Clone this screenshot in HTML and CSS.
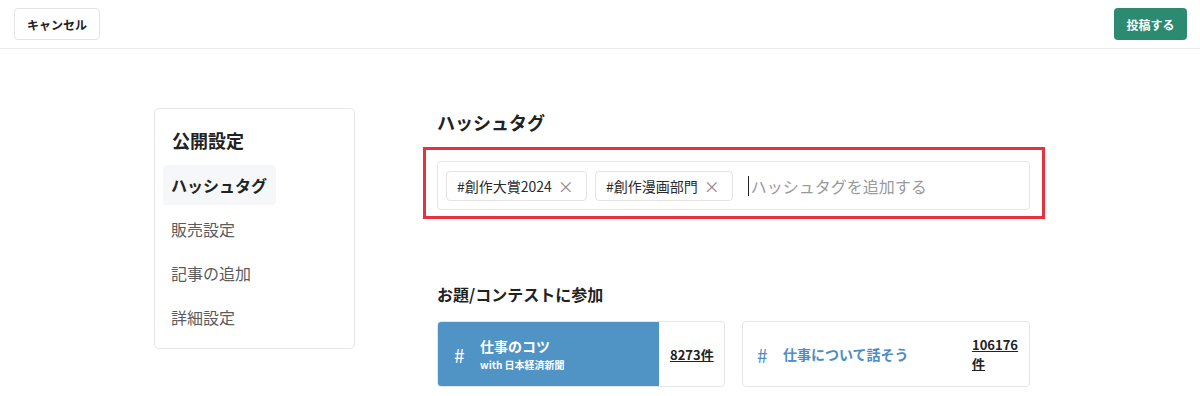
FILE: index.html
```html
<!DOCTYPE html>
<html lang="ja">
<head>
    <meta charset="UTF-8">
    <meta name="viewport" content="width=device-width, initial-scale=1.0">
    <title>公開設定</title>
    <link rel="stylesheet" href="styles.css">
</head>
<body>
    <header class="top-bar">
        <button class="btn-cancel">キャンセル</button>
        <button class="btn-post">投稿する</button>
    </header>

    <div class="page">
        <aside class="side-menu">
            <h2>公開設定</h2>
            <ul>
                <li class="active">ハッシュタグ</li>
                <li>販売設定</li>
                <li>記事の追加</li>
                <li>詳細設定</li>
            </ul>
        </aside>

        <main class="content">
            <h3 class="section-title">ハッシュタグ</h3>
            <div class="highlight-frame">
                <div class="tag-input">
                    <span class="tag">#創作大賞2024 <span class="tag-close">×</span></span>
                    <span class="tag">#創作漫画部門 <span class="tag-close">×</span></span>
                    <span class="caret"></span>
                    <span class="placeholder">ハッシュタグを追加する</span>
                </div>
            </div>

            <h4 class="contest-title">お題/コンテストに参加</h4>
            <div class="contest-list">
                <div class="contest-card">
                    <div class="contest-main selected">
                        <span class="hash">#</span>
                        <div class="contest-text">
                            <div class="contest-name">仕事のコツ</div>
                            <div class="contest-sub">with 日本経済新聞</div>
                        </div>
                    </div>
                    <a class="contest-count">8273件</a>
                </div>
                <div class="contest-card">
                    <div class="contest-main">
                        <span class="hash">#</span>
                        <div class="contest-text">
                            <div class="contest-name">仕事について話そう</div>
                        </div>
                    </div>
                    <a class="contest-count narrow">106176件</a>
                </div>
            </div>
        </main>
    </div>
</body>
</html>
```

FILE: styles.css
```css
body {
    font-family: "Noto Sans CJK JP", "Noto Sans", sans-serif;
    background-color: #ffffff;
    color: #222;
    margin: 0;
}

.top-bar {
    display: flex;
    justify-content: space-between;
    align-items: center;
    height: 48px;
    padding: 0 13px 0 14px;
    border-bottom: 1px solid #ececec;
}

.top-bar button {
    font-family: inherit;
    font-size: 12px;
    font-weight: 700;
    height: 32px;
    padding: 0 12px;
    border-radius: 4px;
    cursor: pointer;
}

.btn-cancel {
    background-color: #fff;
    color: #222;
    border: 1px solid #e3e3e3;
}

.btn-post {
    background-color: #2b8a70;
    color: #fff;
    border: none;
    width: 73px;
}

.page {
    display: flex;
    gap: 82px;
    padding: 59px 0 0 154px;
}

/* left menu */
.side-menu {
    width: 201px;
    box-sizing: border-box;
    border: 1px solid #e6e6e6;
    border-radius: 5px;
    padding: 17px 8px 7px;
    align-self: flex-start;
}

.side-menu h2 {
    margin: 0 0 11px;
    padding: 0 9px;
    font-size: 18px;
    line-height: 28px;
    font-weight: 700;
}

.side-menu ul {
    list-style: none;
    margin: 0;
    padding: 0;
}

.side-menu li {
    display: table;
    height: 40px;
    line-height: 40px;
    padding: 0 8px;
    margin-bottom: 4px;
    font-size: 16px;
    color: #5c5c5c;
    border-radius: 4px;
}

.side-menu li.active {
    background-color: #f5f7f8;
    color: #222;
    font-weight: 700;
    padding-right: 9px;
}

/* main column */
.content {
    width: 593px;
}

.section-title {
    margin: 0 0 11px;
    font-size: 18px;
    line-height: 28px;
    font-weight: 700;
}

.highlight-frame {
    border: 3px solid #e5323e;
    margin: 0 -15px 0 -14px;
    padding: 11px 12px 6px 11px;
}

.tag-input {
    display: flex;
    align-items: center;
    gap: 8px;
    height: 49px;
    box-sizing: border-box;
    padding: 0 8px;
    border: 1px solid #e6e6e6;
    border-radius: 4px;
}

.tag {
    display: inline-flex;
    align-items: center;
    height: 30px;
    box-sizing: border-box;
    padding: 0 12px 0 10px;
    border: 1px solid #e3e3e3;
    border-radius: 4px;
    font-size: 14px;
    color: #2a2a2a;
    white-space: nowrap;
}

.tag-close {
    margin-left: 6px;
    color: #888;
    font-size: 16px;
}

.caret {
    width: 1px;
    height: 20px;
    background-color: #222;
    margin: 0 -6px 0 7px;
}

.placeholder {
    font-size: 16px;
    color: #9a9a9a;
}

.contest-title {
    margin: 63px 0 15px;
    font-size: 16px;
    line-height: 24px;
    font-weight: 700;
}

.contest-list {
    display: grid;
    grid-template-columns: 288px 288px;
    gap: 17px;
}

.contest-card {
    display: flex;
    height: 66px;
    box-sizing: border-box;
    border: 1px solid #e6e6e6;
    border-radius: 4px;
    overflow: hidden;
}

.contest-main {
    display: flex;
    align-items: center;
    flex: 1;
    padding-left: 14px;
    color: #4b8dc4;
}

.contest-main.selected {
    flex: 0 0 222px;
    box-sizing: border-box;
    background-color: #5093c5;
    color: #fff;
    margin: -1px 0 -1px -1px;
    padding-left: 17px;
}

.hash {
    font-size: 19px;
    width: 26px;
}

.contest-name {
    font-size: 14px;
    font-weight: 700;
    line-height: 22px;
}

.contest-sub {
    font-size: 10px;
    font-weight: 700;
    line-height: 16px;
}

.contest-count {
    align-self: center;
    margin: 0 0 0 11px;
    font-size: 13px;
    font-weight: 700;
    color: #222;
    text-decoration: underline;
    line-height: 19px;
    white-space: nowrap;
}

.contest-count.narrow {
    width: 44px;
    margin-right: 13px;
    white-space: normal;
}
```
